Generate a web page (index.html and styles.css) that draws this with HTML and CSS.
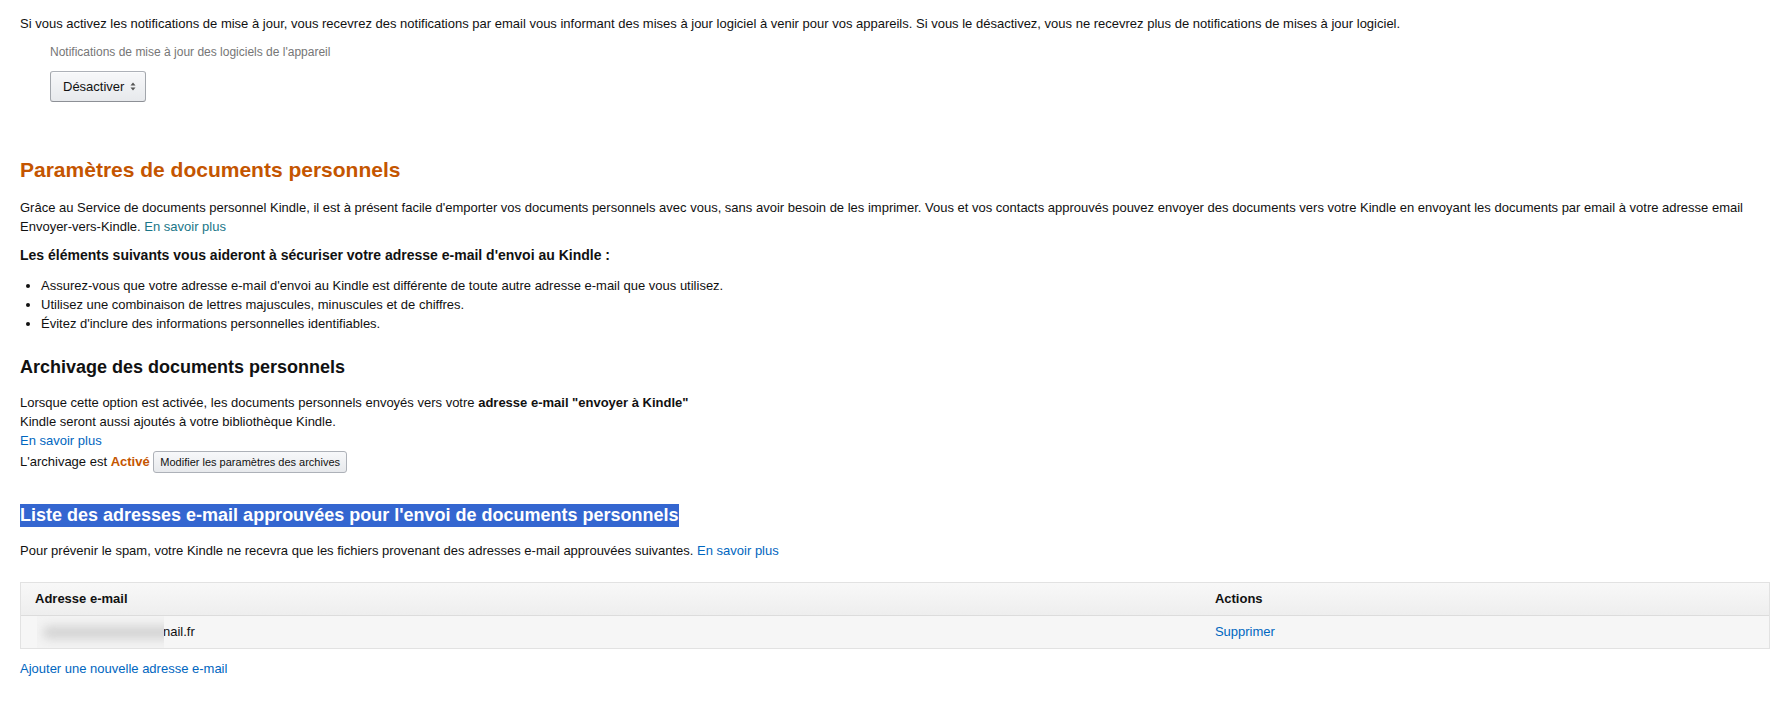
FILE: index.html
```html
<!DOCTYPE html>
<html lang="fr">
<head>
<meta charset="utf-8">
<title>Paramètres de documents personnels</title>
<link rel="stylesheet" href="styles.css">
</head>
<body>
<div class="page">
  <p class="intro">Si vous activez les notifications de mise à jour, vous recevrez des notifications par email vous informant des mises à jour logiciel à venir pour vos appareils. Si vous le désactivez, vous ne recevrez plus de notifications de mises à jour logiciel.</p>
  <div class="notif">
    <div class="notif-label">Notifications de mise à jour des logiciels de l'appareil</div>
    <button class="select">Désactiver
      <svg class="arrows" width="6" height="9" viewBox="0 0 6 9"><path d="M3 0.5 L5.5 3.5 H0.5 Z M3 8.5 L5.5 5.5 H0.5 Z" fill="#555"/></svg>
    </button>
  </div>

  <h2 class="title">Paramètres de documents personnels</h2>
  <p class="para">Grâce au Service de documents personnel Kindle, il est à présent facile d'emporter vos documents personnels avec vous, sans avoir besoin de les imprimer. Vous et vos contacts approuvés pouvez envoyer des documents vers votre Kindle en envoyant les documents par email à votre adresse email Envoyer-vers-Kindle. <a class="link-teal" href="#">En savoir plus</a></p>
  <p class="strong-line">Les éléments suivants vous aideront à sécuriser votre adresse e-mail d'envoi au Kindle :</p>
  <ul class="tips">
    <li>Assurez-vous que votre adresse e-mail d'envoi au Kindle est différente de toute autre adresse e-mail que vous utilisez.</li>
    <li>Utilisez une combinaison de lettres majuscules, minuscules et de chiffres.</li>
    <li>Évitez d'inclure des informations personnelles identifiables.</li>
  </ul>

  <h3 class="subtitle">Archivage des documents personnels</h3>
  <div class="archive">
    <div>Lorsque cette option est activée, les documents personnels envoyés vers votre <b>adresse e-mail "envoyer à Kindle"</b></div>
    <div>Kindle seront aussi ajoutés à votre bibliothèque Kindle.</div>
    <div><a class="link" href="#">En savoir plus</a></div>
    <div class="archive-state">L'archivage est <span class="active">Activé</span> <button class="small-btn">Modifier les paramètres des archives</button></div>
  </div>

  <h3 class="subtitle selected"><span>Liste des adresses e-mail approuvées pour l'envoi de documents personnels</span></h3>
  <p class="para spam">Pour prévenir le spam, votre Kindle ne recevra que les fichiers provenant des adresses e-mail approuvées suivantes. <a class="link" href="#">En savoir plus</a></p>

  <div class="table">
    <div class="row head">
      <div class="cell">Adresse e-mail</div>
      <div class="cell">Actions</div>
    </div>
    <div class="row body">
      <div class="cell email"><span class="blur"><span class="blur-in"></span></span>nail.fr</div>
      <div class="cell"><a class="link" href="#">Supprimer</a></div>
    </div>
  </div>
  <a class="link add" href="#">Ajouter une nouvelle adresse e-mail</a>
</div>
</body>
</html>
```
FILE: styles.css
```css
html, body {
  margin: 0;
  padding: 0;
  background: #fff;
}
body {
  font-family: "Liberation Sans", Arial, sans-serif;
  font-size: 13px;
  line-height: 19px;
  color: #111;
}
.page {
  padding: 14px 15px 40px 20px;
}
p { margin: 0; }
a { text-decoration: none; }
.link { color: #0066c0; }
.link-teal { color: #1a7688; }

.notif {
  margin: 10px 0 0 30px;
}
.notif-label {
  font-size: 12px;
  line-height: 18px;
  color: #767676;
}
.select {
  margin-top: 10px;
  height: 31px;
  padding: 0 9px 0 12px;
  display: inline-flex;
  align-items: center;
  gap: 6px;
  font-family: "Liberation Sans", Arial, sans-serif;
  font-size: 13px;
  color: #111;
  background: linear-gradient(#f7f8fa, #e7e9ec);
  border: 1px solid #adb1b8;
  border-color: #adb1b8 #a2a6ac #8d9096;
  border-radius: 3px;
  box-shadow: 0 1px 0 rgba(255,255,255,.6) inset;
}
.arrows { display: block; }

.title {
  margin: 55px 0 0;
  font-size: 21px;
  line-height: 26px;
  font-weight: bold;
  color: #c45500;
}
.para { margin-top: 15px; }
.strong-line {
  margin-top: 10px;
  font-size: 14px;
  font-weight: bold;
}
.tips {
  margin: 11px 0 0;
  padding-left: 21px;
}

.subtitle {
  margin: 23px 0 0;
  font-size: 18px;
  line-height: 22px;
  font-weight: bold;
}
.archive { margin-top: 15px; }
.archive-state { line-height: 21px; margin-top: 1px; }
.active { color: #c45500; font-weight: bold; }
.small-btn {
  height: 22px;
  padding: 0 6px;
  font-family: "Liberation Sans", Arial, sans-serif;
  font-size: 11px;
  color: #111;
  background: linear-gradient(#f7f8fa, #e7e9ec);
  border: 1px solid #adb1b8;
  border-radius: 3px;
  vertical-align: middle;
  position: relative;
  top: -1px;
}

.selected {
  margin-top: 29px;
  line-height: 24px;
}
.selected span {
  display: inline-block;
  line-height: 23px;
  background: #3466d0;
  color: #fff;
}
.spam { margin-top: 14px; }

.table {
  margin-top: 22px;
  border: 1px solid #e2e2e2;
}
.row {
  display: grid;
  grid-template-columns: 67.5% 1fr;
  height: 32px;
  align-items: center;
}
.head {
  background: linear-gradient(#f8f8f8, #eeeeee);
  font-weight: bold;
  border-bottom: 1px solid #dcdcdc;
}
.body { background: #f6f6f6; }
.cell { padding-left: 14px; }
.email {
  display: flex;
  align-items: center;
  height: 32px;
}
.blur {
  display: block;
  width: 127px;
  height: 32px;
  margin-left: 2px;
  margin-right: -1px;
  overflow: hidden;
  position: relative;
  background: #f3f3f3;
}
.blur-in {
  position: absolute;
  left: 6px;
  right: -10px;
  top: 10px;
  height: 13px;
  background: #d4d4d4;
  border-radius: 6px;
  filter: blur(5px);
}
.add {
  display: inline-block;
  margin-top: 10px;
}
```
